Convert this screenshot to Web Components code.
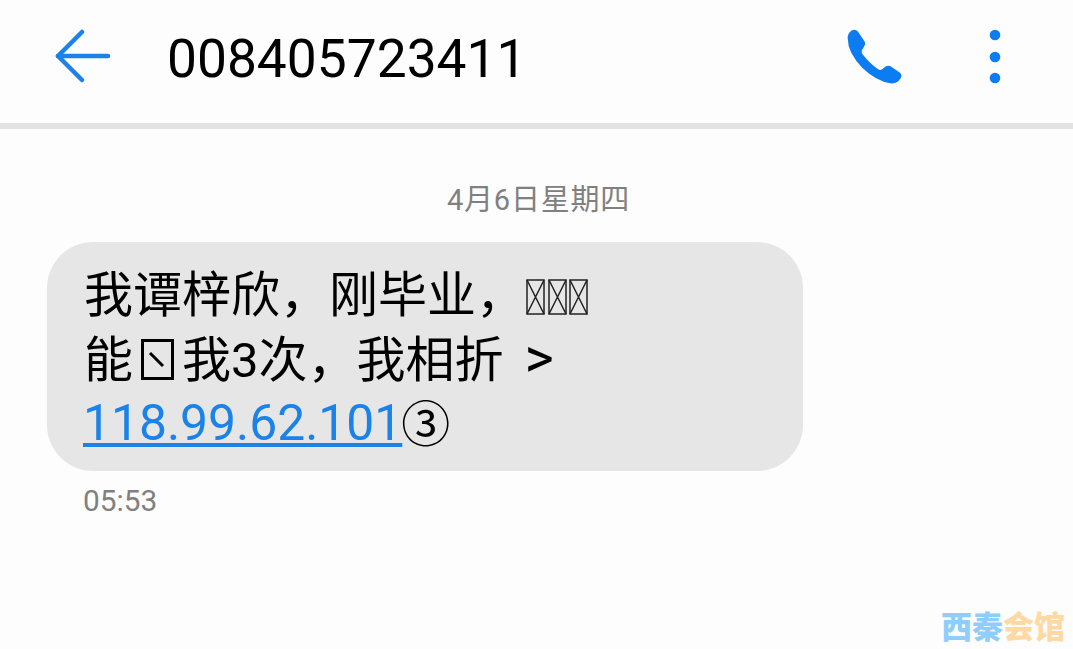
<!DOCTYPE html>
<html lang="zh-CN">
<head>
<meta charset="utf-8">
<title>SMS</title>
<style>
  html, body { margin: 0; height: 100%; background: #fdfdfd; }
  body { overflow: hidden; font-family: Roboto, "Noto Sans CJK SC", sans-serif; }
</style>
</head>
<body>
<sms-thread>
  <sms-header number="008405723411"></sms-header>
  <sms-date>4月6日星期四</sms-date>
  <sms-bubble>
    我谭梓欣，刚毕业，<sms-tofu></sms-tofu><sms-tofu></sms-tofu><sms-tofu></sms-tofu><br>
    能<sms-tofu wide></sms-tofu>我3次，我相折<span>&gt;</span><br>
    <a>118.99.62.101</a>③
  </sms-bubble>
  <sms-time>05:53</sms-time>
  <sms-mark></sms-mark>
</sms-thread>

<script>
class SmsThread extends HTMLElement {
    constructor() {
        super();
        this.attachShadow({ mode: 'open' });
        this.shadowRoot.innerHTML = `
      <style>
        :host {
          display: flex;
          flex-direction: column;
          position: relative;
          width: 1073px;
          height: 649px;
          background: #fdfdfd;
        }
      </style>
      <slot></slot>
    `;
    }
}

class SmsHeader extends HTMLElement {
    constructor() {
        super();
        this.attachShadow({ mode: 'open' });
    }

    connectedCallback() {
        const number = this.getAttribute('number') || '';
        this.shadowRoot.innerHTML = `
      <style>
        :host {
          display: flex;
          align-items: center;
          height: 123px;
          border-bottom: 6px solid #e2e2e2;
          padding-left: 55px;
          flex: none;
        }
        .back { width: 58px; height: 58px; margin-right: 54px; flex: none; margin-top: -9px; }
        .title {
          flex: 1;
          font: 400 53.300px/1 Roboto, sans-serif;
          color: #000;
          margin-top: -3px;
        }
        .call { width: 57px; height: 57px; flex: none; margin-top: -11px; margin-right: 86px; }
        .more { width: 12px; height: 58px; flex: none; margin-right: 72px; margin-top: -8px; }
      </style>
      <svg class="back" viewBox="0 0 58 58" fill="none" stroke="#1a82e8" stroke-width="4.500" stroke-linecap="round" stroke-linejoin="round">
        <path d="M27 4 L3 28 L27 52"/>
        <path d="M3 28 H53"/>
      </svg>
      <div class="title">${number}</div>
      <svg class="call" viewBox="80 55 170 170" fill="#0b7cf2">
        <path d="M98 62 Q108 57 116 66 L136 96 Q140 103 134 110 L127 122 Q126 128 130 134 Q152 162 176 178 Q182 182 188 178 L198 170 Q205 165 213 169 L240 188 Q249 195 243 205 L236 214 Q228 222 212 220 Q170 213 130 175 Q85 130 85 85 Q85 70 98 62 Z"/>
      </svg>
      <svg class="more" viewBox="0 0 12 58" fill="#0b7cf2">
        <circle cx="6" cy="6" r="5.300"/>
        <circle cx="6" cy="28" r="5.300"/>
        <circle cx="6" cy="49" r="5.300"/>
      </svg>
    `;
    }
}

class SmsDate extends HTMLElement {
    constructor() {
        super();
        this.attachShadow({ mode: 'open' });
        this.shadowRoot.innerHTML = `
      <style>
        :host {
          display: block;
          text-align: center;
          margin-top: 51px;
          padding-left: 4px;
          height: 40px;
          font: 400 29px/40px Roboto, "Noto Sans CJK SC", sans-serif;
          letter-spacing: 0.800px;
          color: #808080;
        }
      </style>
      <slot></slot>
    `;
    }
}

class SmsBubble extends HTMLElement {
    constructor() {
        super();
        this.attachShadow({ mode: 'open' });
        this.shadowRoot.innerHTML = `
      <style>
        :host {
          display: block;
          box-sizing: border-box;
          width: 756px;
          height: 229px;
          margin: 22px 0 0 47px;
          padding: 21px 0 0 37px;
          border-radius: 46px;
          background: #e6e6e6;
          color: #000;
          font: 400 49px/65px Roboto, "Noto Sans CJK SC", sans-serif;
          white-space: nowrap;
        }
        ::slotted(a) {
          font-size: 49.800px;
          line-height: 50px;
          margin-left: -1px;
          margin-right: -1px;
          vertical-align: 2px;
          color: #1a82e8;
          text-decoration: underline;
          text-decoration-thickness: 4px;
          text-underline-offset: 3px;
        }
        ::slotted(span) {
          font-size: 56px;
          line-height: 50px;
          margin-left: 21px;
        }
      </style>
      <slot></slot>
    `;
    }
}

// the little boxes the phone draws for characters it has no font for
class SmsTofu extends HTMLElement {
    constructor() {
        super();
        this.attachShadow({ mode: 'open' });
    }

    connectedCallback() {
        const wide = this.hasAttribute('wide');
        this.shadowRoot.innerHTML = wide ? `
      <style>
        :host { display: inline-block; width: 49px; height: 42px; vertical-align: -4px; }
        svg { display: block; }
      </style>
      <svg width="49" height="42" viewBox="0 0 49 42" fill="none" stroke="#000" stroke-width="3">
        <rect x="9.500" y="1.500" width="30" height="38"/>
        <path d="M17 14 L30 27"/>
      </svg>
    ` : `
      <style>
        :host { display: inline-block; width: 21px; height: 36px; vertical-align: -3px; margin-right: 0.500px; }
        svg { display: block; }
      </style>
      <svg width="21" height="36" viewBox="0 0 21 36" fill="none" stroke="#222" stroke-width="1.500">
        <rect x="2" y="1" width="17" height="34"/>
        <path d="M2 1 L19 35 M19 1 L2 35"/>
      </svg>
    `;
    }
}

class SmsTime extends HTMLElement {
    constructor() {
        super();
        this.attachShadow({ mode: 'open' });
        this.shadowRoot.innerHTML = `
      <style>
        :host {
          display: block;
          margin: 13px 0 0 83px;
          font: 400 29.800px/34px Roboto, sans-serif;
          color: #808080;
        }
      </style>
      <slot></slot>
    `;
    }
}

class SmsMark extends HTMLElement {
    constructor() {
        super();
        this.attachShadow({ mode: 'open' });
        this.shadowRoot.innerHTML = `
      <style>
        :host {
          position: absolute;
          right: 8px;
          bottom: 6px;
          font: 900 31px/36px "Noto Sans CJK SC", sans-serif;
          white-space: nowrap;
        }
        .a { color: #8fcdfb; }
        .b { color: #ffd9a3; }
      </style>
      <span class="a">西秦</span><span class="b">会馆</span>
    `;
    }
}

customElements.define('sms-thread', SmsThread);
customElements.define('sms-header', SmsHeader);
customElements.define('sms-date', SmsDate);
customElements.define('sms-bubble', SmsBubble);
customElements.define('sms-tofu', SmsTofu);
customElements.define('sms-time', SmsTime);
customElements.define('sms-mark', SmsMark);
</script>
</body>
</html>
